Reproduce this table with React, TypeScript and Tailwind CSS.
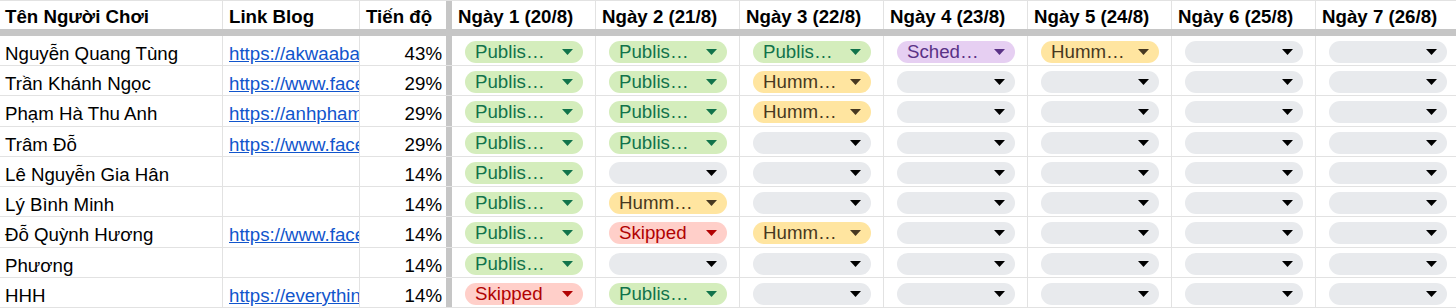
import React from "react";

type K = "G" | "Y" | "P" | "R" | "E";

const chip: Record<K, { bg: string; text: string; fill: string; label: string }> = {
  G: { bg: "bg-[#d4edbc]", text: "text-[#11734b]", fill: "#11734b", label: "Publis…" },
  Y: { bg: "bg-[#ffe5a0]", text: "text-[#473821]", fill: "#473821", label: "Humm…" },
  P: { bg: "bg-[#e6cff2]", text: "text-[#5a3286]", fill: "#5a3286", label: "Sched…" },
  R: { bg: "bg-[#ffcfc9]", text: "text-[#b10202]", fill: "#b10202", label: "Skipped" },
  E: { bg: "bg-[#e8eaed]", text: "text-black", fill: "#000000", label: "" },
};

const rows: { name: string; link: string; pct: string; days: K[]; tall: boolean }[] = [
  { name: "Nguyễn Quang Tùng", link: "https://akwaabab", pct: "43%", days: ["G", "G", "G", "P", "Y", "E", "E"], tall: false },
  { name: "Trần Khánh Ngọc", link: "https://www.faceb", pct: "29%", days: ["G", "G", "Y", "E", "E", "E", "E"], tall: false },
  { name: "Phạm Hà Thu Anh", link: "https://anhphamb", pct: "29%", days: ["G", "G", "Y", "E", "E", "E", "E"], tall: true },
  { name: "Trâm Đỗ", link: "https://www.faceb", pct: "29%", days: ["G", "G", "E", "E", "E", "E", "E"], tall: false },
  { name: "Lê Nguyễn Gia Hân", link: "", pct: "14%", days: ["G", "E", "E", "E", "E", "E", "E"], tall: false },
  { name: "Lý Bình Minh", link: "", pct: "14%", days: ["G", "Y", "E", "E", "E", "E", "E"], tall: false },
  { name: "Đỗ Quỳnh Hương", link: "https://www.faceb", pct: "14%", days: ["G", "R", "Y", "E", "E", "E", "E"], tall: true },
  { name: "Phương", link: "", pct: "14%", days: ["G", "E", "E", "E", "E", "E", "E"], tall: false },
  { name: "HHH", link: "https://everythingh", pct: "14%", days: ["R", "G", "E", "E", "E", "E", "E"], tall: false },
];

const days = [
  "Ngày 1 (20/8)",
  "Ngày 2 (21/8)",
  "Ngày 3 (22/8)",
  "Ngày 4 (23/8)",
  "Ngày 5 (24/8)",
  "Ngày 6 (25/8)",
  "Ngày 7 (26/8)",
];

function Chip({ k }: { k: K }) {
  const c = chip[k];
  return (
    <div
      className={`mt-[5px] ml-[13px] flex h-[22px] w-[118px] shrink-0 items-center justify-between rounded-full pl-[10px] pr-[10px] ${c.bg} ${c.text}`}
    >
      <span className="leading-[22px] whitespace-nowrap">{c.label}</span>
      <svg width="11" height="6" viewBox="0 0 11 6" className="shrink-0">
        <polygon points="0,0 11,0 5.5,6" fill={c.fill} />
      </svg>
    </div>
  );
}

export default function App() {
  return (
    <div
      className="w-[1456px] h-[308px] overflow-hidden bg-white text-black text-[18.7px]"
      style={{ fontFamily: '"Liberation Sans", Arial, sans-serif' }}
    >
      {/* header */}
      <div className="flex h-[29px] border-t border-[#e2e2e2] font-bold">
        <div className="w-[223px] shrink-0 border-r border-[#e2e2e2] pl-[5px] pt-[5px] leading-[22px] whitespace-nowrap">
          Tên Người Chơi
        </div>
        <div className="w-[137px] shrink-0 border-r border-[#e2e2e2] pl-[6px] pt-[5px] leading-[22px] whitespace-nowrap">
          Link Blog
        </div>
        <div className="w-[86px] shrink-0 pl-[6px] pt-[5px] leading-[22px] whitespace-nowrap">Tiến độ</div>
        <div className="w-[6px] shrink-0 bg-[#c6c6c6]" />
        {days.map((d) => (
          <div
            key={d}
            className="w-[144px] shrink-0 border-r border-[#e2e2e2] pl-[6px] pt-[5px] leading-[22px] whitespace-nowrap"
          >
            {d}
          </div>
        ))}
      </div>
      {/* freeze band */}
      <div className="h-[7px] bg-[#c6c6c6]" />
      {/* rows */}
      {rows.map((r) => (
        <div key={r.name} className={`flex border-b border-[#e2e2e2] ${r.tall ? "h-[31px]" : "h-[30px]"}`}>
          <div className="w-[223px] shrink-0 border-r border-[#e2e2e2] pl-[5px] pt-[7px] leading-[22px] whitespace-nowrap overflow-hidden">
            {r.name}
          </div>
          <div className="w-[137px] shrink-0 border-r border-[#e2e2e2] pl-[6px] pt-[7px] leading-[22px] whitespace-nowrap overflow-hidden">
            {r.link && <span className="text-[#1155cc] underline">{r.link}</span>}
          </div>
          <div className="w-[86px] shrink-0 pr-[4px] pt-[7px] text-right leading-[22px] whitespace-nowrap">{r.pct}</div>
          <div className="w-[6px] shrink-0 bg-[#c6c6c6]" />
          {r.days.map((k, i) => (
            <div key={i} className="w-[144px] shrink-0 border-r border-[#e2e2e2]">
              <Chip k={k} />
            </div>
          ))}
        </div>
      ))}
    </div>
  );
}
